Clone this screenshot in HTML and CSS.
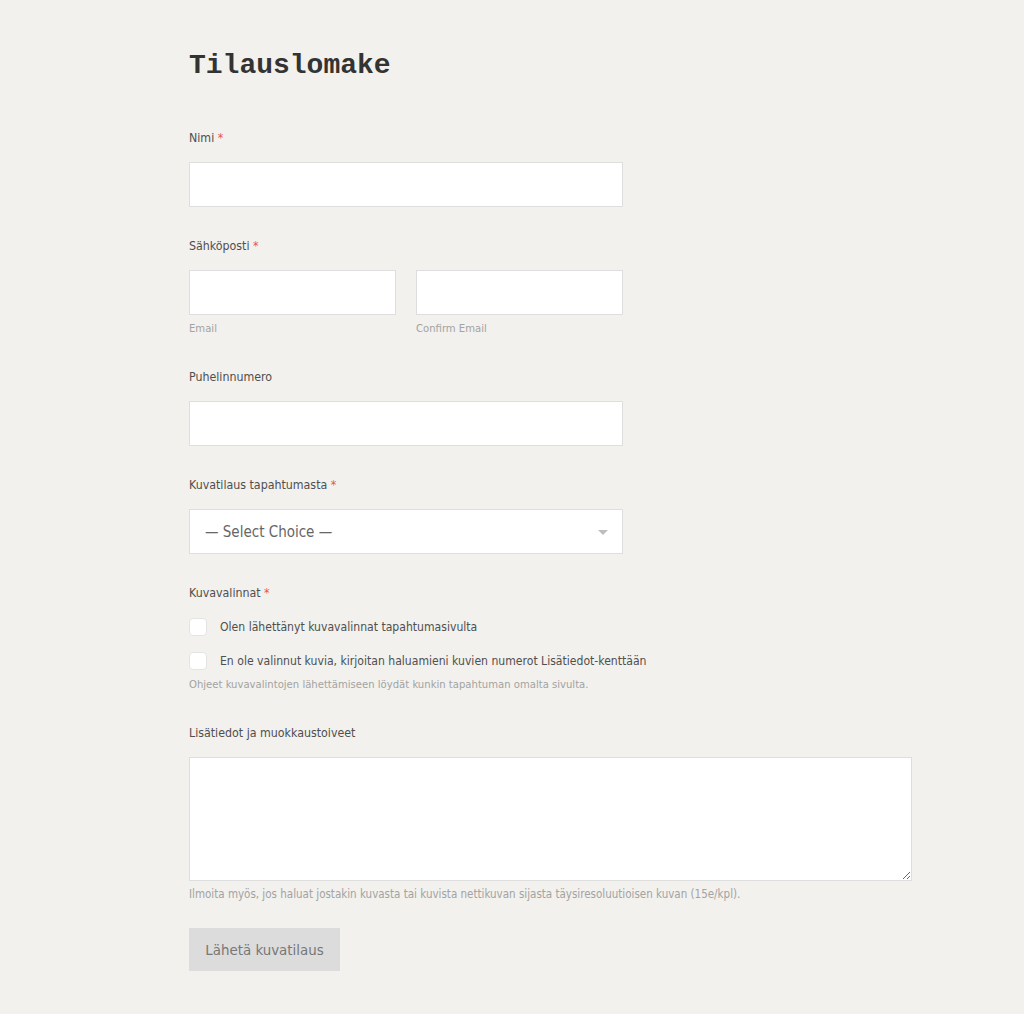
FILE: index.html
```html
<!DOCTYPE html>
<html lang="fi">
<head>
<meta charset="utf-8">
<title>Tilauslomake</title>
<link rel="stylesheet" href="styles.css">
</head>
<body>
<main class="page">
  <h1 class="title">Tilauslomake</h1>
  <form class="form">
    <div class="field">
      <label class="label">Nimi <span class="req">*</span></label>
      <input class="input input-half" type="text">
    </div>
    <div class="field">
      <label class="label">Sähköposti <span class="req">*</span></label>
      <div class="email-row">
        <div class="email-col">
          <input class="input" type="email">
          <span class="sublabel">Email</span>
        </div>
        <div class="email-col">
          <input class="input" type="email">
          <span class="sublabel">Confirm Email</span>
        </div>
      </div>
    </div>
    <div class="field">
      <label class="label">Puhelinnumero</label>
      <input class="input input-half" type="text">
    </div>
    <div class="field">
      <label class="label">Kuvatilaus tapahtumasta <span class="req">*</span></label>
      <div class="select">
        <span class="select-text">— Select Choice —</span>
        <span class="select-arrow"></span>
      </div>
    </div>
    <div class="field">
      <label class="label">Kuvavalinnat <span class="req">*</span></label>
      <div class="checks">
        <label class="check"><span class="box"></span><span>Olen lähettänyt kuvavalinnat tapahtumasivulta</span></label>
        <label class="check"><span class="box"></span><span>En ole valinnut kuvia, kirjoitan haluamieni kuvien numerot Lisätiedot-kenttään</span></label>
      </div>
      <p class="desc">Ohjeet kuvavalintojen lähettämiseen löydät kunkin tapahtuman omalta sivulta.</p>
    </div>
    <div class="field">
      <label class="label">Lisätiedot ja muokkaustoiveet</label>
      <textarea class="textarea"></textarea>
      <p class="desc desc-ta">Ilmoita myös, jos haluat jostakin kuvasta tai kuvista nettikuvan sijasta täysiresoluutioisen kuvan (15e/kpl).</p>
    </div>
    <div class="actions">
      <button class="submit" type="button">Lähetä kuvatilaus</button>
    </div>
  </form>
</main>
</body>
</html>
```
FILE: styles.css
```css
* { box-sizing: border-box; }
html, body {
  margin: 0;
  padding: 0;
  background: #f2f1ed;
}
body {
  font-family: "DejaVu Sans Condensed", "Liberation Sans", sans-serif;
  color: #555;
}
.page {
  width: 723px;
  margin-left: 189px;
  padding-top: 49px;
  padding-bottom: 40px;
}
.title {
  margin: 0;
  font-family: "Liberation Mono", "Courier New", monospace;
  font-weight: bold;
  font-size: 28px;
  line-height: 34px;
  color: #333;
}
.form {
  margin-top: 44px;
  display: flex;
  flex-direction: column;
}
.field {
  display: flex;
  flex-direction: column;
  margin-bottom: 28px;
}
.label {
  font-size: 12.3px;
  line-height: 22px;
  color: #4f4f4f;
  margin-bottom: 13px;
}
.req { color: #e8574d; }
.input {
  display: block;
  height: 45px;
  border: 1px solid #dedede;
  background: #fff;
  margin: 0;
  padding: 0 12px;
  font: inherit;
  outline: none;
  border-radius: 0;
}
.input-half { width: 434px; }
.email-row {
  display: flex;
  gap: 20px;
  width: 434px;
}
.email-col {
  flex: 1;
  display: flex;
  flex-direction: column;
}
.email-col .input { width: 100%; }
.sublabel {
  margin-top: 4px;
  font-size: 11.2px;
  line-height: 19px;
  color: #a3a3a3;
}
.select {
  width: 434px;
  height: 45px;
  background: #fff;
  border: 1px solid #dedede;
  display: flex;
  align-items: center;
  justify-content: space-between;
  padding: 0 14px 0 15px;
}
.select-text {
  font-size: 15px;
  color: #666;
}
.select-arrow {
  width: 0;
  height: 0;
  border-left: 5px solid transparent;
  border-right: 5px solid transparent;
  border-top: 5px solid #bdbdbd;
  margin-top: 1px;
}
.checks {
  display: flex;
  flex-direction: column;
  gap: 16px;
  margin-top: 1px;
}
.check {
  display: flex;
  align-items: center;
  gap: 13px;
  font-size: 12.1px;
  line-height: 18px;
  color: #4f4f4f;
}
.box {
  width: 18px;
  height: 18px;
  background: #fff;
  border: 1px solid #e4e4e4;
  border-radius: 4px;
  flex: none;
}
.desc {
  margin: 6px 0 0;
  font-size: 11.2px;
  line-height: 18px;
  color: #a3a3a3;
}
.textarea {
  display: block;
  width: 723px;
  height: 124px;
  border: 1px solid #dedede;
  background: #fff;
  margin: 0;
  font: inherit;
  outline: none;
  border-radius: 0;
  resize: both;
}
.desc-ta { margin-top: 4px; font-size: 11.5px; }
.actions {
  margin-top: -3px;
}
.submit {
  width: 151px;
  height: 43px;
  border: none;
  background: #dcdcdc;
  color: #777;
  font-family: inherit;
  font-size: 14.9px;
  padding: 0;
  cursor: pointer;
}
```
